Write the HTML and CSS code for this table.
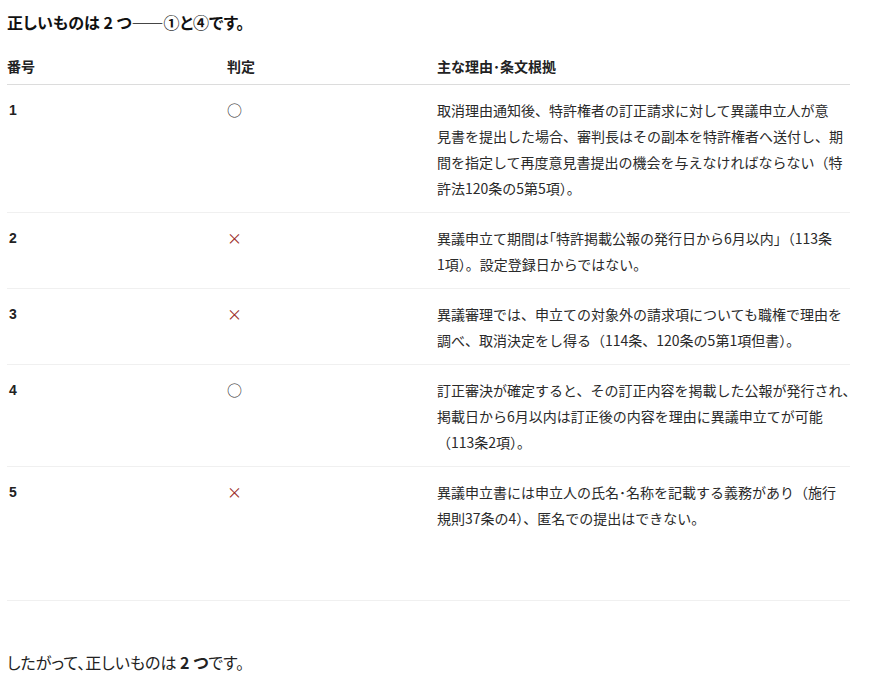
FILE: index.html
```html
<!DOCTYPE html>
<html lang="ja">
<head>
<meta charset="utf-8">
<link rel="stylesheet" href="styles.css">
</head>
<body>
<div class="wrap">
  <p class="title">正しいものは 2 つ——①と④です。</p>
  <table class="judge">
    <colgroup>
      <col class="c-no">
      <col class="c-mark">
      <col class="c-reason">
    </colgroup>
    <thead>
      <tr><th>番号</th><th>判定</th><th>主な理由･条文根拠</th></tr>
    </thead>
    <tbody>
      <tr>
        <td class="no">1</td>
        <td class="mark ok">○</td>
        <td class="reason">取消理由通知後、特許権者の訂正請求に対して異議申立人が意<br>見書を提出した場合、審判長はその副本を特許権者へ送付し、期<br>間を指定して再度意見書提出の機会を与えなければならない（特<br>許法120条の5第5項）。</td>
      </tr>
      <tr>
        <td class="no">2</td>
        <td class="mark ng">×</td>
        <td class="reason">異議申立て期間は｢特許掲載公報の発行日から6月以内｣（113条<br>1項）。設定登録日からではない。</td>
      </tr>
      <tr>
        <td class="no">3</td>
        <td class="mark ng">×</td>
        <td class="reason">異議審理では、申立ての対象外の請求項についても職権で理由を<br>調べ、取消決定をし得る（114条、120条の5第1項但書）。</td>
      </tr>
      <tr>
        <td class="no">4</td>
        <td class="mark ok">○</td>
        <td class="reason">訂正審決が確定すると、その訂正内容を掲載した公報が発行され、<br>掲載日から6月以内は訂正後の内容を理由に異議申立てが可能<br>（113条2項）。</td>
      </tr>
      <tr class="last">
        <td class="no">5</td>
        <td class="mark ng">×</td>
        <td class="reason">異議申立書には申立人の氏名･名称を記載する義務があり（施行<br>規則37条の4）、匿名での提出はできない。</td>
      </tr>
    </tbody>
  </table>
  <p class="summary">したがって、正しいものは <strong>2 つ</strong>です。</p>
</div>
</body>
</html>
```

FILE: styles.css
```css
html, body {
  margin: 0;
  padding: 0;
  background: #fff;
}

body {
  font-family: "Noto Sans CJK JP", "Noto Sans", sans-serif;
  color: #222;
}

.wrap {
  width: 843px;
  padding: 10px 0 0 7px;
}

.title {
  margin: 0;
  font-size: 16px;
  line-height: 24px;
  font-weight: 700;
  color: #111;
  font-feature-settings: "palt";
}

.judge {
  margin-top: 14px;
  width: 843px;
  border-collapse: collapse;
  table-layout: fixed;
}

.c-no { width: 220px; }
.c-mark { width: 210px; }
.c-reason { width: 413px; }

.judge th {
  text-align: left;
  font-size: 14px;
  line-height: 20px;
  font-weight: 700;
  color: #222;
  padding: 8px 0;
  border-bottom: 1px solid #dcdcdc;
}

.judge td {
  vertical-align: top;
  font-size: 14px;
  line-height: 26px;
  color: #2a2a2a;
  padding: 12px 0 11px 0;
  border-bottom: 1px solid #f0f0f0;
}

.judge td.reason {
  white-space: nowrap;
}

.judge tr.last td {
  padding-bottom: 69px;
}

.judge td.no {
  font-family: "Liberation Sans", Arial, sans-serif;
  font-weight: 700;
  padding-left: 2px;
  color: #222;
}

.judge td.mark {
  font-size: 15px;
}

.mark.ok { color: #333; }
.mark.ng { color: #9b2c26; }

.summary {
  margin: 48px 0 0 0;
  font-size: 16px;
  line-height: 26px;
  color: #222;
  font-feature-settings: "palt";
}

.summary strong {
  font-weight: 700;
}
```
